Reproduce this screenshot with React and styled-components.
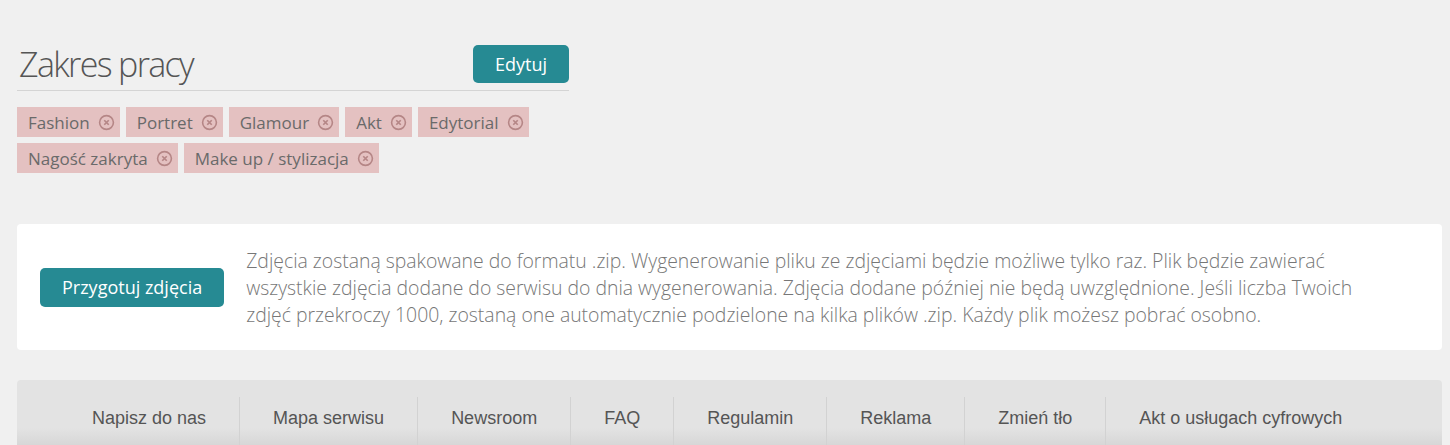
import React from "react";
import styled, { createGlobalStyle } from "styled-components";

const tags = [
  "Fashion",
  "Portret",
  "Glamour",
  "Akt",
  "Edytorial",
  "Nagość zakryta",
  "Make up / stylizacja",
];

const links = [
  "Napisz do nas",
  "Mapa serwisu",
  "Newsroom",
  "FAQ",
  "Regulamin",
  "Reklama",
  "Zmień tło",
  "Akt o usługach cyfrowych",
];

const RemoveIcon = () => (
  <svg width="17" height="17" viewBox="0 0 16 16">
    <circle cx="8" cy="8" r="6.5" fill="none" stroke="#b58686" strokeWidth="1.5" />
    <path d="M5.9 5.9 L10.1 10.1 M10.1 5.9 L5.9 10.1" stroke="#b58686" strokeWidth="1.6" />
  </svg>
);

const App = () => {
  return (
    <>
      <GlobalStyle />
      <Page>
        <Section>
          <HeaderRow>
            <Title>Zakres pracy</Title>
            <Button>Edytuj</Button>
          </HeaderRow>
          <Tags>
            {tags.map((tag) => (
              <Tag key={tag}>
                {tag}
                <RemoveIcon />
              </Tag>
            ))}
          </Tags>
        </Section>

        <Panel>
          <Button $tall>Przygotuj zdjęcia</Button>
          <Note>
            Zdjęcia zostaną spakowane do formatu .zip. Wygenerowanie pliku ze
            zdjęciami będzie możliwe tylko raz. Plik będzie zawierać wszystkie
            zdjęcia dodane do serwisu do dnia wygenerowania. Zdjęcia dodane
            później nie będą uwzględnione. Jeśli liczba Twoich zdjęć przekroczy
            1000, zostaną one automatycznie podzielone na kilka plików .zip.
            Każdy plik możesz pobrać osobno.
          </Note>
        </Panel>

        <Footer>
          <Links>
            {links.map((link, index) => (
              <LinkItem key={link} $first={index === 0}>
                <a href="#">{link}</a>
              </LinkItem>
            ))}
          </Links>
        </Footer>
      </Page>
    </>
  );
};

export default App;

const GlobalStyle = createGlobalStyle`
  html, body {
    margin: 0;
    background: #f0f0f0;
    font-family: "Open Sans", "DejaVu Sans", sans-serif;
    overflow: hidden;
  }
`;

const Page = styled.div`
  padding: 45px 8px 0 17px;
`;

const Section = styled.div`
  width: 552px;
`;

const HeaderRow = styled.div`
  display: flex;
  justify-content: space-between;
  align-items: flex-end;
  padding-bottom: 7px;
  border-bottom: 1px solid #d4d4d4;
`;

const Title = styled.h2`
  margin: 0 0 0 2px;
  font-size: 34px;
  font-weight: 300;
  letter-spacing: -1.65px;
  line-height: 38px;
  color: #555;
`;

const Button = styled.button`
  height: ${(props) => (props.$tall ? "39px" : "38px")};
  padding: 0 22px;
  border: none;
  border-radius: 5px;
  background: #268a93;
  color: #fff;
  font-family: "Open Sans", sans-serif;
  font-size: 18px;
  white-space: nowrap;
  cursor: pointer;
  flex-shrink: 0;
`;

const Tags = styled.div`
  display: flex;
  flex-wrap: wrap;
  gap: 6px;
  margin-top: 16px;
`;

const Tag = styled.span`
  display: inline-flex;
  align-items: center;
  gap: 8px;
  height: 30px;
  padding: 0 5px 0 11px;
  background: #e4c1c1;
  color: #6a6a6a;
  font-size: 17px;
`;

const Panel = styled.div`
  display: flex;
  align-items: center;
  gap: 22px;
  height: 126px;
  box-sizing: border-box;
  margin-top: 51px;
  padding: 0 0 0 23px;
  background: #fff;
  border-radius: 4px;
`;

const Note = styled.p`
  max-width: 1110px;
  margin: 0;
  font-size: 19.4px;
  font-weight: 300;
  line-height: 27px;
  color: #777;
`;

const Footer = styled.div`
  margin-top: 30px;
  height: 70px;
  padding: 17px 0 0 42px;
  box-sizing: border-box;
  border-radius: 4px 4px 0 0;
  background: linear-gradient(#e3e3e3 0, #e3e3e3 48px, #d6d6d6 66px);
`;

const Links = styled.ul`
  display: flex;
  margin: 0;
  padding: 0;
  list-style: none;
`;

const LinkItem = styled.li`
  padding: 9px 33px 20px;
  border-left: ${(props) => (props.$first ? "none" : "1px solid #d2d2d2")};

  a {
    font-family: "Liberation Sans", Arial, sans-serif;
    font-size: 18px;
    line-height: 24px;
    color: #555;
    text-decoration: none;
  }
`;
